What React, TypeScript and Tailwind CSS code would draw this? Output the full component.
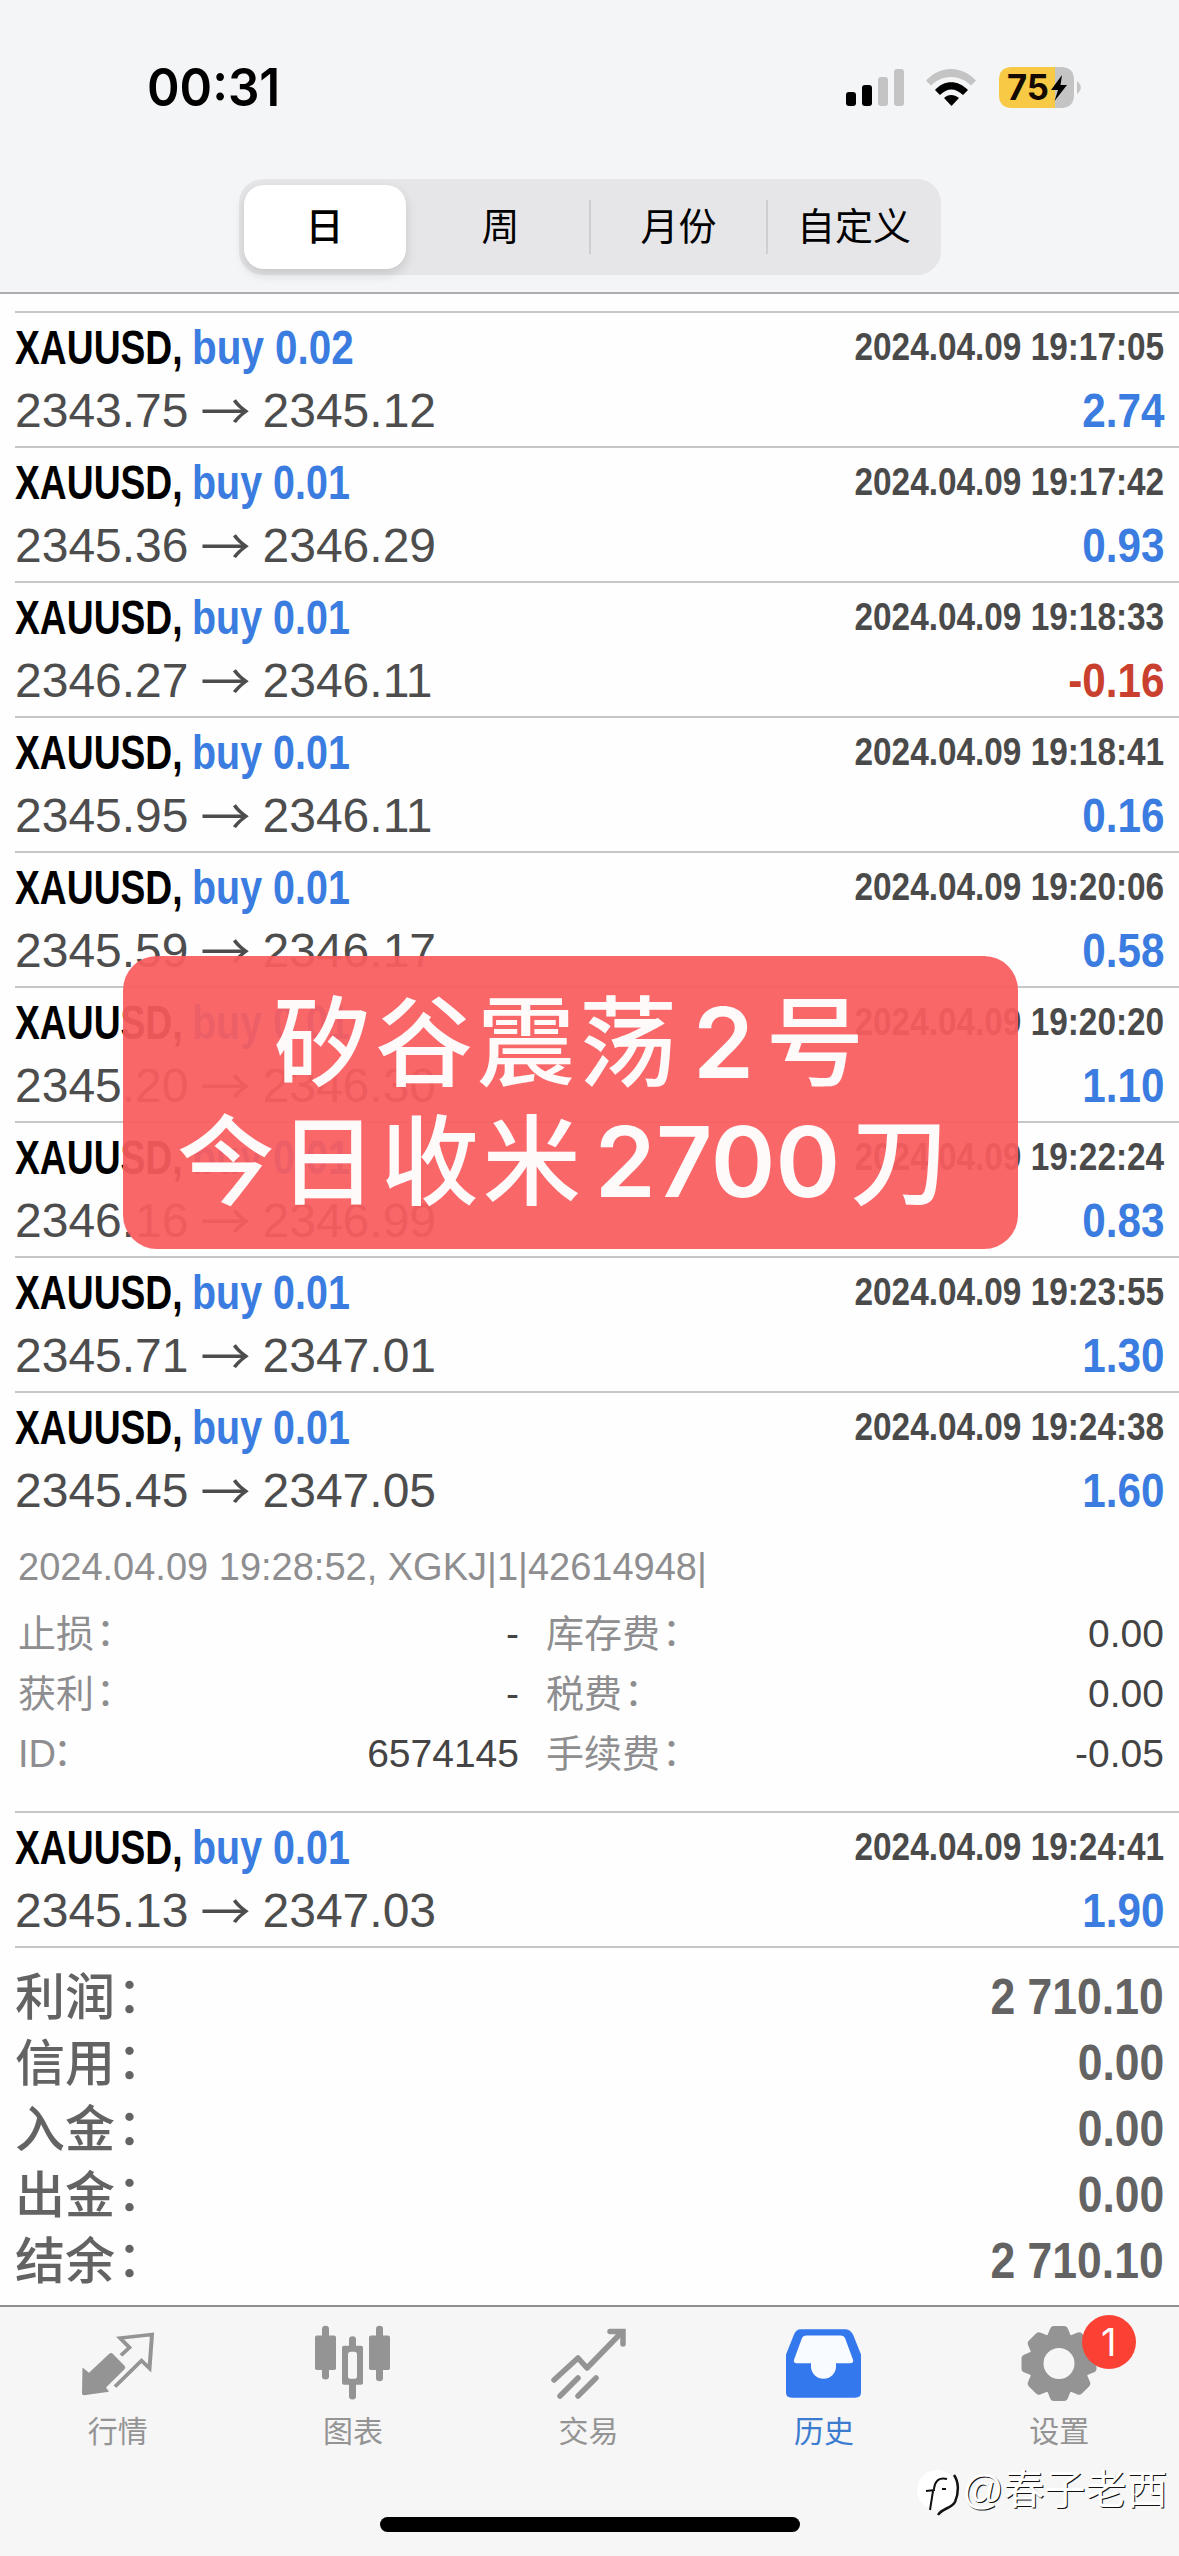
import React from 'react';

const deals = [
    { lot: '0.02', open: '2343.75', close: '2345.12', time: '2024.04.09 19:17:05', profit: '2.74' },
    { lot: '0.01', open: '2345.36', close: '2346.29', time: '2024.04.09 19:17:42', profit: '0.93' },
    { lot: '0.01', open: '2346.27', close: '2346.11', time: '2024.04.09 19:18:33', profit: '-0.16' },
    { lot: '0.01', open: '2345.95', close: '2346.11', time: '2024.04.09 19:18:41', profit: '0.16' },
    { lot: '0.01', open: '2345.59', close: '2346.17', time: '2024.04.09 19:20:06', profit: '0.58' },
    { lot: '0.01', open: '2345.20', close: '2346.30', time: '2024.04.09 19:20:20', profit: '1.10' },
    { lot: '0.01', open: '2346.16', close: '2346.99', time: '2024.04.09 19:22:24', profit: '0.83' },
    { lot: '0.01', open: '2345.71', close: '2347.01', time: '2024.04.09 19:23:55', profit: '1.30' },
    {
        lot: '0.01', open: '2345.45', close: '2347.05', time: '2024.04.09 19:24:38', profit: '1.60',
        comment: '2024.04.09 19:28:52, XGKJ|1|42614948|',
        details: [
            ['止损', '-', '库存费', '0.00'],
            ['获利', '-', '税费', '0.00'],
            ['ID', '6574145', '手续费', '-0.05'],
        ],
    },
    { lot: '0.01', open: '2345.13', close: '2347.03', time: '2024.04.09 19:24:41', profit: '1.90' },
];

const totals = [
    ['利润', '2 710.10'],
    ['信用', '0.00'],
    ['入金', '0.00'],
    ['出金', '0.00'],
    ['结余', '2 710.10'],
];

const periods = [
    { label: '日', width: 'w-[162px] rounded-[20px] bg-white font-medium shadow-[0_5px_12px_rgba(0,0,0,0.14)]' },
    { label: '周', width: 'w-[184px] pl-[6px]' },
    { label: '月份', width: 'w-[177px]', divider: true },
    { label: '自定义', width: 'w-[174px]', divider: true },
];

function StatusBar() {
    return (
        <div className="flex h-[176px] items-center justify-between pl-[147px] pr-[98px]">
            <span className="origin-left scale-x-[0.95] font-['Inter',sans-serif] text-[52px] font-semibold leading-none text-black">00:31</span>
            <svg width="240" height="44" viewBox="0 0 240 44">
                <g fill="#000">
                    <rect x="5" y="26" width="10" height="14" rx="3" />
                    <rect x="21" y="19" width="10" height="21" rx="3" />
                    <rect x="37" y="11" width="10" height="29" rx="3" fill="#c4c4c5" />
                    <rect x="53" y="3" width="10" height="37" rx="3" fill="#c4c4c5" />
                </g>
                <path d="M85 14.5C99 -1 121 -1 135 14.5L130 19.5C118.500 8 101.500 8 90 19.500Z" fill="#c4c4c5" />
                <path d="M94 24C103 13.500 117 13.500 127 24L122 29C114.500 21.500 106 21.500 99 29Z" fill="#000" />
                <path d="M103 32C107 28 113 28 118 32L110.500 40Z" fill="#000" />
                <path d="M171 1H214V42H171C162 42 158 37 158 29V14C158 6 162 1 171 1Z" fill="#f7c944" />
                <path d="M214 1H220C229 1 233 6 233 14V29C233 37 229 42 220 42H214Z" fill="#c4c4c5" />
                <path d="M236 15C241 19 241 24 236 28Z" fill="#c4c4c5" />
                <text x="166" y="34" fontFamily="Inter, sans-serif" fontWeight="700" fontSize="35" textLength="42" lengthAdjust="spacingAndGlyphs" fill="#140a00">75</text>
                <path d="M221 9L210 24H217L213.500 35L226 19H219.500Z" fill="#000" />
            </svg>
        </div>
    );
}

function Segments() {
    return (
        <div className="mx-auto flex h-[96px] w-[702px] rounded-[24px] bg-[#e6e6e8] py-[6px] pl-[5px]">
            {periods.map(p => (
                <div key={p.label} className={`flex items-center justify-center text-[38px] leading-none text-black ${p.width}`}>
                    {p.divider && <div className="-ml-px h-[54px] w-[2px] bg-[#cfcfd1]" />}
                    <span className="flex-1 text-center">{p.label}</span>
                </div>
            ))}
        </div>
    );
}

function Label({ text }: { text: string }) {
    return (
        <span>
            {text}
            <span className={`relative -top-[2px] ${text === 'ID' ? '-left-[3px]' : 'left-[2px]'}`}>：</span>
        </span>
    );
}

function DealRow({ deal }: { deal: typeof deals[number] }) {
    return (
        <div className="ml-[15px] border-t-2 border-[#c6c6c8] pr-[15px]">
            <div className="flex h-[70px] items-center justify-between whitespace-nowrap font-bold leading-none">
                <div className="flex pb-[2px] text-[49px]">
                    <div className="w-[177px]">
                        <span className="inline-block origin-left scale-x-[0.76] text-black">XAUUSD,</span>
                    </div>
                    <span className={`inline-block origin-left text-[#3b7ce0] ${deal.lot === '0.02' ? 'scale-x-[0.825]' : 'scale-x-[0.805]'}`}>buy {deal.lot}</span>
                </div>
                <span className="origin-right scale-x-[0.855] pb-[3px] text-[39px] text-[#4a4a4a]">{deal.time}</span>
            </div>
            <div className="flex h-[63px] items-start justify-between whitespace-nowrap text-[48px] leading-[56px]">
                <div className="flex text-[#4d4d4d]">
                    <span>{deal.open}</span>
                    <span className="-mt-[3px] w-[74px] text-center font-['Noto_Sans_CJK_SC',sans-serif] text-[50px]">→</span>
                    <span>{deal.close}</span>
                </div>
                <span className={`origin-right scale-x-[0.88] font-bold ${deal.profit.startsWith('-') ? 'text-[#c9402f]' : 'text-[#3b7ce0]'}`}>{deal.profit}</span>
            </div>
            {deal.details && (
                <div className="h-[285px] pl-[3px] pt-[11px] text-[38px] leading-[60px] text-[#8e8e90]">
                    <p className="mb-[7px]">{deal.comment}</p>
                    {deal.details.map(([label, value, feeLabel, fee]) => (
                        <div key={label} className="flex h-[60px]">
                            <div className="flex w-[501px] justify-between">
                                <Label text={label} />
                                <span className="text-[39px] text-[#444]">{value}</span>
                            </div>
                            <div className="ml-[27px] flex flex-1 justify-between">
                                <Label text={feeLabel} />
                                <span className="text-[39px] text-[#444]">{fee}</span>
                            </div>
                        </div>
                    ))}
                </div>
            )}
        </div>
    );
}

function QuotesIcon() {
    return (
        <svg width="96" height="78" viewBox="1 0 96 90" preserveAspectRatio="none" fill="#949494">
            <path d="M13.500 49L20 55L40 33.500Q42 31 44 33.500L55.500 47Q57 49 55.500 51L37 72L40 77L15 81Q13 81 13 79Z" />
            <path d="M52 35L60.500 26L51 15L83 11L80.500 50L72.500 41L46 71" fill="none" stroke="#949494" strokeWidth="4" />
        </svg>
    );
}

function ChartIcon() {
    return (
        <svg width="96" height="78" viewBox="0 0 96 90" preserveAspectRatio="none" fill="#949494">
            <rect x="17" y="1" width="7" height="62" rx="3.500" />
            <rect x="10" y="12" width="21" height="40" rx="2" />
            <rect x="71" y="1" width="7" height="64" rx="3.500" />
            <rect x="64" y="12" width="21" height="40" rx="2" />
            <rect x="44" y="13" width="7" height="73" rx="3.500" />
            <rect x="37" y="24" width="21" height="45" rx="2" />
            <rect x="43" y="31" width="9" height="31" rx="3" fill="#f6f6f6" />
        </svg>
    );
}

function TradeIcon() {
    return (
        <svg width="96" height="78" viewBox="0 0 96 78" fill="none" stroke="#949494" strokeWidth="5.5" strokeLinecap="round">
            <path d="M13 55L37 33L46 43L80 8" strokeLinejoin="round" />
            <path d="M69 6.500H82V19" />
            <path d="M19 71L37 53M37 71L55 53" />
        </svg>
    );
}

function HistoryIcon() {
    return (
        <svg width="96" height="78" viewBox="0 0 96 90" preserveAspectRatio="none" fill="#3478ee">
            <path d="M25 5H69Q74 5 77 11L85 34V78Q85 84 79 84H16Q10 84 10 78V34L18 11Q20 5 25 5Z" />
            <path d="M30 12H65Q68 12 69 15L77 40Q78 44 74 44H60V48A12.500 14 0 0 1 35 48V44H21Q17 44 18 40L26 15Q27 12 30 12Z" fill="#f8fbff" />
        </svg>
    );
}

function SettingsIcon() {
    return (
        <svg width="96" height="78" viewBox="0 0 96 78" fill="#949494">
            {[0, 45, 90, 135, 180, 225, 270, 315].map(a => (
                <path key={a} d="M34 14Q37 10 39 4Q40 1 43 1H53Q56 1 57 4Q59 10 62 14Z" transform={`rotate(${a} 48 38.5)`} />
            ))}
            <path fillRule="evenodd" d="M48 9A29.500 29.500 0 1 0 48 68A29.500 29.500 0 1 0 48 9ZM48 23A15.500 15.500 0 1 1 48 54A15.500 15.500 0 1 1 48 23Z" />
        </svg>
    );
}

const tabs = [
    { label: '行情', icon: QuotesIcon },
    { label: '图表', icon: ChartIcon },
    { label: '交易', icon: TradeIcon },
    { label: '历史', icon: HistoryIcon },
    { label: '设置', icon: SettingsIcon, badge: 1 },
];

export default function App() {
    return (
        <div className="relative flex h-[2556px] w-[1179px] flex-col overflow-hidden bg-[#fefefe] font-['Liberation_Sans','Noto_Sans_CJK_SC',sans-serif]">
            <header className="h-[294px] border-b-2 border-[#adadaf] bg-[#f4f5f6]">
                <StatusBar />
                <div className="pt-[3px]">
                    <Segments />
                </div>
            </header>

            <main className="flex-1 pt-[17px]">
                {deals.map(deal => <DealRow key={deal.time} deal={deal} />)}
                <div className="ml-[15px] border-t-2 border-[#c6c6c8] pr-[15px] pt-[16px] text-[50px] font-bold text-[#636363]">
                    {totals.map(([label, value]) => (
                        <div key={label} className="flex h-[66px] items-center justify-between leading-none">
                            <span className="pb-[9px] font-['Noto_Sans_CJK_SC',sans-serif] font-medium"><Label text={label} /></span>
                            <span className="origin-right scale-x-[0.89]">{value}</span>
                        </div>
                    ))}
                </div>
            </main>

            {/* TAB BAR */}
            <nav className="flex h-[251px] justify-between border-t-2 border-[#8e8e90] bg-[#f6f6f6] pr-[2px]">
                {tabs.map((tab, i) => (
                    <div key={tab.label} className="relative flex flex-1 flex-col items-center pt-[18px]">
                        <tab.icon />
                        <span className={`mt-[11px] text-[30px] leading-[36px] ${i === 3 ? 'text-[#3b7bd0]' : 'text-[#949494]'}`}>{tab.label}</span>
                        {tab.badge && (
                            <span className="absolute left-[140px] top-[8px] flex size-[54px] items-center justify-center rounded-full bg-[#fb4034] font-['Inter',sans-serif] text-[38px] leading-none text-white">{tab.badge}</span>
                        )}
                    </div>
                ))}
            </nav>

            {/* home indicator and author mark */}
            <div className="absolute bottom-[24px] left-[380px] h-[15px] w-[420px] rounded-full bg-black" />
            <div className="absolute left-[916px] top-[2465px] flex items-center whitespace-nowrap text-white">
                <svg width="46" height="54" viewBox="0 0 46 54" fill="none">
                    <circle cx="21" cy="25" r="20" fill="#fff" />
                    <path d="M14 45L17 26M10 26L19 25M18 24C19 15 24 12 31 14M26 24H30" stroke="#111" strokeWidth="2" />
                    <path d="M38 10C43 17 43 28 39 37C35 44 26 43 22 50" stroke="#111" strokeWidth="2.500" />
                </svg>
                <span className="-mt-[4px] text-[41px] leading-none [text-shadow:1px_1px_0_#111]">@春子老西</span>
            </div>

            <div className="absolute left-[123px] top-[956px] flex h-[293px] w-[895px] flex-col items-center rounded-[34px] bg-[#f95d5fef] pt-[27px] font-['Inter','Noto_Sans_CJK_SC',sans-serif] text-[98px] font-medium leading-[119px] tracking-[4px] text-[#fffafa]">
                <p>矽谷震荡<span className="mx-[12px] font-semibold tracking-normal">2</span>号</p>
                <p className="-ml-[12px]">今日收米<span className="mx-[10px] font-semibold tracking-normal">2700</span>刀</p>
            </div>
        </div>
    );
}
